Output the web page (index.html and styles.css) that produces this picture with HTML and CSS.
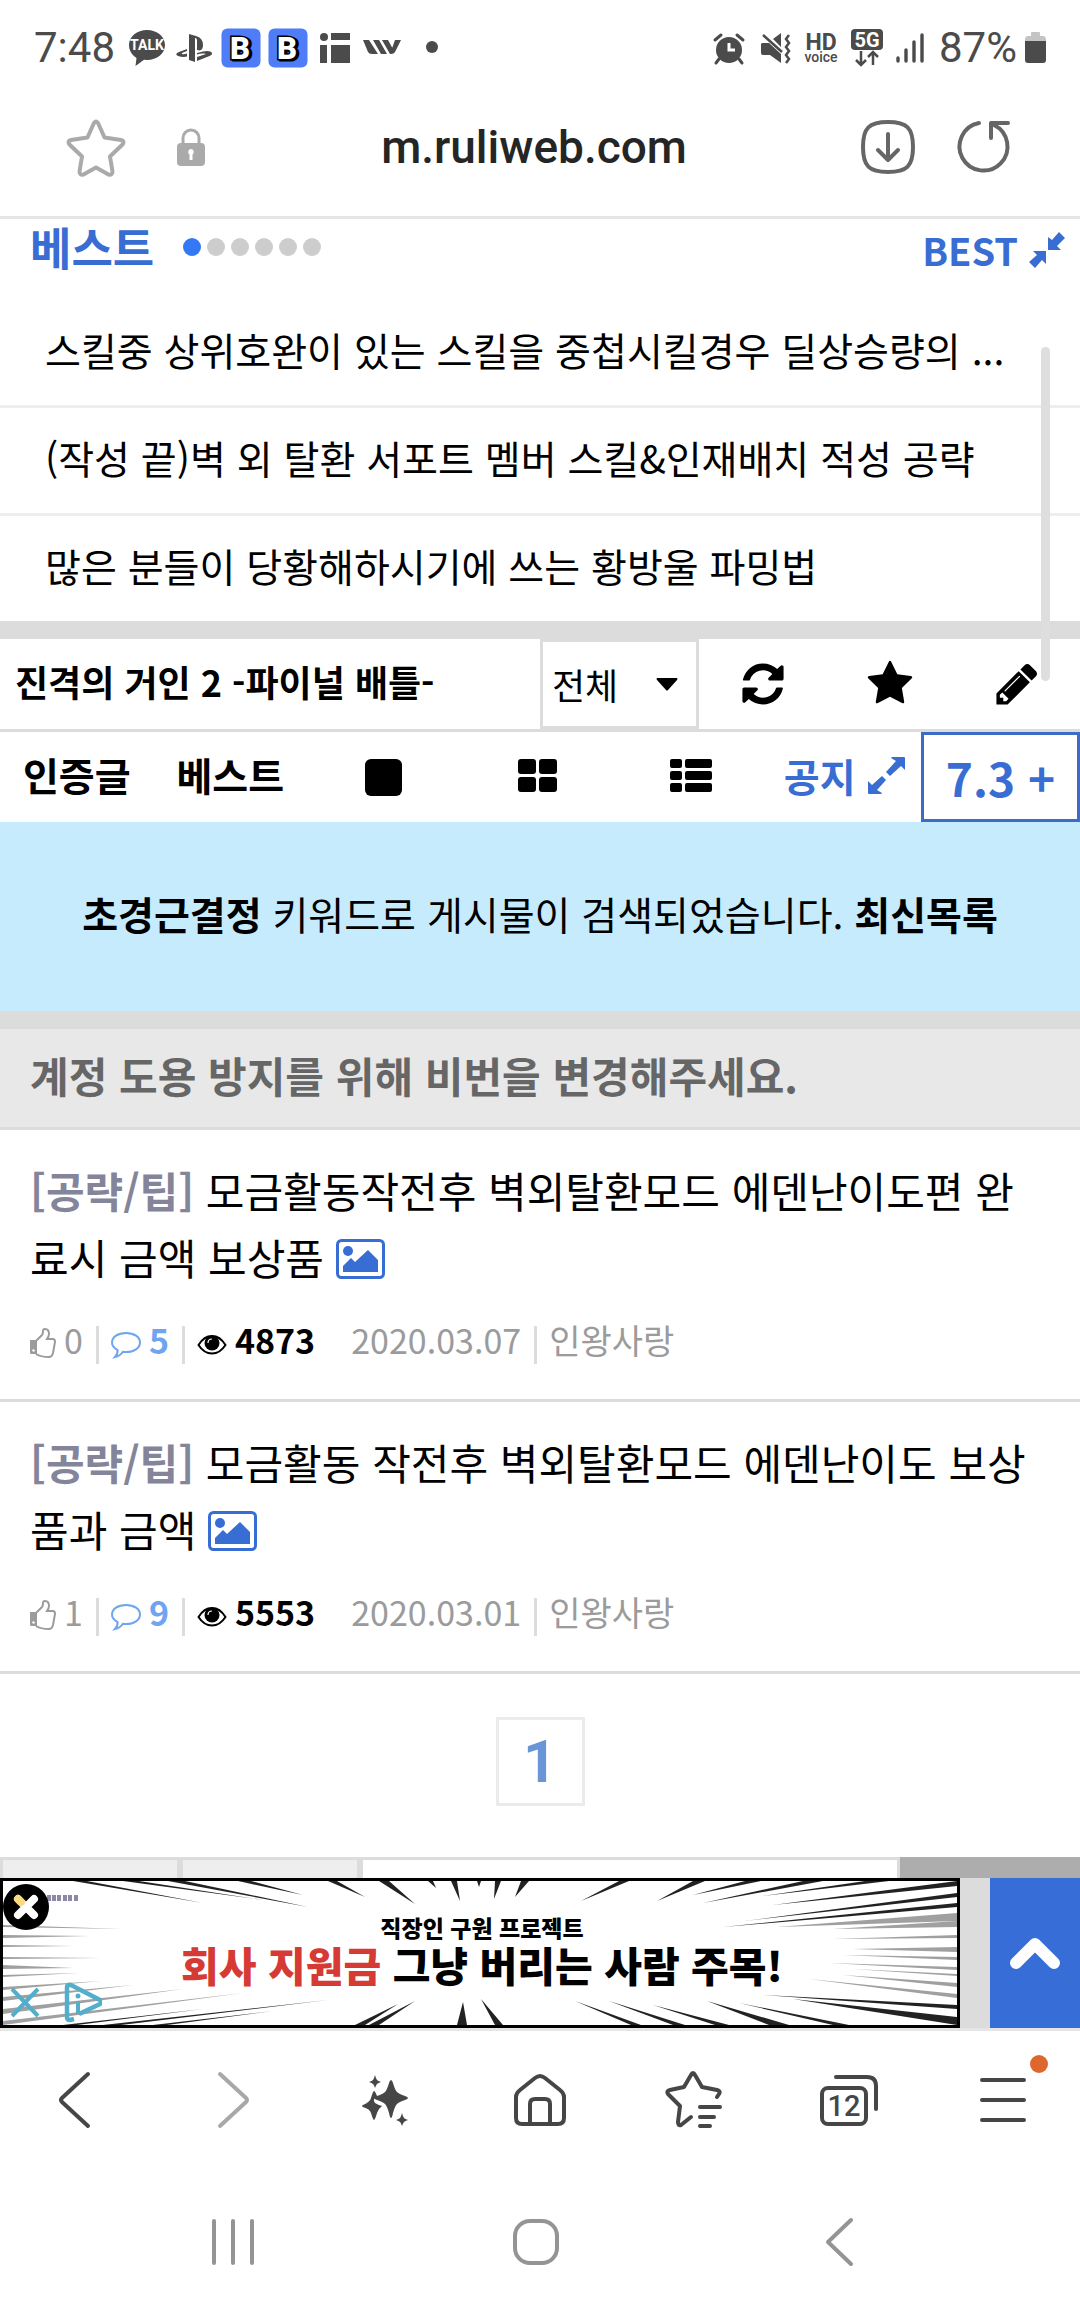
FILE: index.html
```html
<!DOCTYPE html>
<html lang="ko">
<head>
<meta charset="utf-8">
<meta name="viewport" content="width=device-width, initial-scale=1">
<title>m.ruliweb.com</title>
<link rel="stylesheet" href="styles.css">
</head>
<body>
<svg class="defs" aria-hidden="true">
  <defs>
    <symbol id="image" viewBox="0 0 49 40">
      <rect x="1.500" y="1.500" width="46" height="37" rx="4" fill="none" stroke="currentColor" stroke-width="3"/>
      <circle cx="12" cy="12" r="5" fill="currentColor"/>
      <path d="M7 33v-6l8-8 4 4 13-12 10 10v12z" fill="currentColor"/>
    </symbol>
    <symbol id="thumb" viewBox="0 0 26 30">
      <path d="M0 12h7v14H1.500Q0 26 0 24.500z" fill="currentColor"/>
      <path d="M6 13l6-6q1-1 1-4 0-2 2-2 4 0 4 5 0 2-2 5h6q2 0 2 3l-2 11q-1 4-4 4-8 0-13-3" fill="none" stroke="currentColor" stroke-width="2"/>
      <circle cx="3.500" cy="22.500" r="1.200" fill="#fff"/>
    </symbol>
    <symbol id="comment" viewBox="0 0 30 30">
      <path d="M15 3c8 0 14 4 14 9.500S23 22 15 22q-2 0-3-.3Q9 26 4 27q3-3 2.500-7Q1 17 1 12.500C1 7 7 3 15 3z" fill="none" stroke="currentColor" stroke-width="2"/>
    </symbol>
    <symbol id="eye" viewBox="0 0 30 30">
      <path d="M1.500 15Q7 6 15 6t13.500 9Q23 23.500 15 23.500T1.500 15z" fill="none" stroke="currentColor" stroke-width="2"/>
      <circle cx="15" cy="13" r="7.500" fill="currentColor"/>
      <path d="M11 13q0-4 4-4" fill="none" stroke="#fff" stroke-width="1.200"/>
    </symbol>
    <symbol id="app-b" viewBox="0 0 40 40">
      <rect width="39" height="39" x=".5" y=".5" rx="6" fill="#4f7cf7"/>
      <text x="21" y="32" text-anchor="middle" class="b-shadow">B</text>
      <text x="19" y="31" text-anchor="middle" class="b-face">B</text>
    </symbol>
  </defs>
</svg>

<header class="status">
  <div class="status-side">
    <span class="clock">7:48</span>
    <div class="status-icons">
      <svg viewBox="0 0 40 40"><path d="M20 2c10 0 18 6.500 18 15s-8 15-18 15l-3-.2L8.500 38l1-8C5 27 2 22.500 2 17 2 8.500 10 2 20 2z"/><text x="20" y="22" text-anchor="middle" class="talk">TALK</text></svg>
      <svg viewBox="0 0 40 40"><path d="M15 6l7 2q7 2 7 9t-6 5V12q0-2-2-2v24l-6-2z"/><path d="M13 21L5 24q-5 2-1 4 5 1.500 9 .5v-3q-3 1-5 .4-1-.6 1-1.400l4-1.400zM23 29l9-3q2 .6-1 2l-8 3v-2zm0-4q13-4 15 0 1 2-5 4l-10 4v-3l8-3q2-1-1-1.500-3-.3-7 1z"/></svg>
      <svg viewBox="0 0 40 40"><use href="#app-b"/></svg>
      <svg viewBox="0 0 40 40"><use href="#app-b"/></svg>
      <svg viewBox="0 0 40 40"><circle cx="9" cy="9" r="4"/><path d="M16 5h19v7H16zM5 17h7v18H5zM16 17h19v18H16z"/></svg>
      <svg viewBox="0 0 40 40"><path d="M1 12h6l9 14h-6q-3 0-4-2zM11 12h6l8 14h-6zM20 12h6l6 11-2 3h-2zM33 12h6l-6 12q-1 2-4 2h-1z"/></svg>
      <svg viewBox="0 0 40 40"><circle cx="23" cy="19" r="6"/></svg>
    </div>
  </div>
  <div class="status-side">
    <div class="status-icons tight">
      <svg viewBox="0 0 40 40"><circle cx="20" cy="22" r="13"/><path d="M10 31l-3 4M30 31l3 4M6 12l6-5M34 12l-6-5" fill="none" stroke="#4b4b4b" stroke-width="3" stroke-linecap="round"/><path d="M20 15v7h6" fill="none" stroke="#fff" stroke-width="3"/></svg>
      <svg viewBox="0 0 40 40"><path d="M6 16q0-1 2-1h6l12 11v9L15 27H8q-2 0-2-2zM18 11l8-6v14z"/><path d="M8 7l19 17M34 7l-3 4 3 4-3 4 3 4-3 4 3 4-3 4" fill="none" stroke="#4b4b4b" stroke-width="2.500"/></svg>
      <svg viewBox="0 0 40 40"><text x="20" y="22" text-anchor="middle" class="hd">HD</text><text x="20" y="34" text-anchor="middle" class="voice">voice</text></svg>
      <svg viewBox="0 0 40 40"><rect x="4" y="1" width="32" height="21" rx="4"/><text x="20" y="19" text-anchor="middle" class="five-g">5G</text><path d="M14 23v14m-5-5l5 5 5-5M26 37V24m-5 5l5-5 5 5" fill="none" stroke="#4b4b4b" stroke-width="2.500"/></svg>
      <svg viewBox="0 0 40 40"><path d="M5 33v-3M13 33V22M21 33V14M29 33V7" fill="none" stroke="#4b4b4b" stroke-width="3.400" stroke-linecap="round"/></svg>
    </div>
    <span class="clock">87%</span>
    <svg class="battery" viewBox="0 0 21 32"><path d="M6 1q0-1 1-1h7q1 0 1 1v3h3q3 0 3 4v2H0V8q0-4 3-4h3z" fill="#c4c4c4"/><path d="M0 9h21v19q0 3-3 3H3q-3 0-3-3z"/></svg>
  </div>
</header>

<nav class="address" aria-label="address">
  <button class="icon-btn pale" aria-label="bookmark"><svg width="60" height="60" viewBox="0 0 60 60"><path class="line" d="M27.500 7q2.500-5 5 0l6 13.500 16.500 2.500q4 1 1.500 4.500L44 39.500l2.500 15q0 4-4 3L30 50.500l-12.500 7q-4 1-4-3l2.500-15L3.500 27.500Q1 24 5 23l16.500-2.500z"/></svg></button>
  <svg class="lock" width="30" height="40" viewBox="0 0 30 40"><path d="M7 17V11a8 8 0 0 1 16 0v6" fill="none" stroke="#aaa" stroke-width="3"/><rect x="1" y="16" width="28" height="23" rx="4" fill="#aaa"/><path d="M15 22a3 3 0 0 1 1.500 5.500V33h-3v-5.500A3 3 0 0 1 15 22z" fill="#fff"/></svg>
  <span class="url">m.ruliweb.com</span>
  <button class="icon-btn" aria-label="download"><svg width="60" height="60" viewBox="0 0 60 60"><path class="line" d="M30 5c19 0 25 6 25 25s-6 25-25 25S5 49 5 30 11 5 30 5zM30 17v26M20 33l10 10 10-10"/></svg></button>
  <button class="icon-btn" aria-label="reload"><svg width="60" height="60" viewBox="0 0 60 60"><path class="line" d="M25 6a24 24 0 1 0 15 2M37 21V6h17"/></svg></button>
</nav>

<main>
  <section class="best">
    <div class="best-head">
      <h2>베스트</h2>
      <div class="dots"><i class="on"></i><i></i><i></i><i></i><i></i><i></i></div>
      <a class="best-link" href="#best">BEST <svg width="36" height="36" viewBox="0 0 36 36"><path d="M19 5v13h13l-4-4 8-8-6-6-7 8zM17 32V19H4l4 4-8 7 6 6 7-8z"/></svg></a>
    </div>
    <ul>
      <li><a href="#1">스킬중 상위호완이 있는 스킬을 중첩시킬경우 딜상승량의 ...</a></li>
      <li><a href="#2">(작성 끝)벽 외 탈환 서포트 멤버 스킬&amp;인재배치 적성 공략</a></li>
      <li><a href="#3">많은 분들이 당황해하시기에 쓰는 황방울 파밍법</a></li>
    </ul>
    <div class="scrollbar"></div>
  </section>

  <div class="band"></div>

  <section class="board">
    <h1>진격의 거인 2 -파이널 배틀-</h1>
    <div class="picker">
      <select aria-label="분류"><option>전체</option></select>
      <svg width="22" height="14" viewBox="0 0 22 14"><path d="M1 1h20q1 1 0 2L12 13q-1 1-2 0L1 3q-1-1 0-2z"/></svg>
    </div>
    <button class="icon-btn" aria-label="새로고침"><svg width="48" height="48" viewBox="0 0 1792 1792"><path d="M1639 1056q0 5-1 7-64 268-268 434.500t-478 166.500q-146 0-282.500-55t-243.500-157l-129 129q-19 19-45 19t-45-19-19-45v-448q0-26 19-45t45-19h448q26 0 45 19t19 45-19 45l-137 137q71 66 161 102t187 36q134 0 250-65t186-179q11-17 53-117 8-23 30-23h192q13 0 22.500 9.500t9.500 22.500zm25-800v448q0 26-19 45t-45 19h-448q-26 0-45-19t-19-45 19-45l138-138q-148-137-349-137-134 0-250 65t-186 179q-11 17-53 117-8 23-30 23h-199q-13 0-22.500-9.500t-9.500-22.500v-7q65-268 270-434.500t480-166.500q146 0 284 55.500t245 156.500l130-129q19-19 45-19t45 19 19 45z"/></svg></button>
    <button class="icon-btn" aria-label="즐겨찾기"><svg width="48" height="48" viewBox="0 0 1792 1792"><path d="M1728 647q0 22-26 48l-363 354 86 500q1 7 1 20 0 21-10.500 35.500t-30.500 14.500q-19 0-40-12l-449-236-449 236q-22 12-40 12-21 0-31.500-14.500t-10.500-35.500q0-6 2-20l86-500-364-354q-25-27-25-48 0-37 56-46l502-73 225-455q19-41 49-41t49 41l225 455 502 73q56 9 56 46z"/></svg></button>
    <button class="icon-btn" aria-label="글쓰기"><svg width="48" height="48" viewBox="0 0 1792 1792"><path d="M491 1536l91-91-235-235-91 91v107h128v128h107zm523-928q0-22-22-22-10 0-17 7l-542 542q-7 7-7 17 0 22 22 22 10 0 17-7l542-542q7-7 7-17zm-54-192l416 416-832 832h-416v-416zm683 96q0 53-37 90l-166 166-416-416 166-165q36-38 90-38 53 0 91 38l235 234q37 39 37 91z"/></svg></button>
  </section>

  <nav class="tools" aria-label="board">
    <a href="#cert">인증글</a>
    <a href="#best">베스트</a>
    <button class="icon-btn" aria-label="카드"><svg width="37" height="37" viewBox="0 0 37 37"><rect width="37" height="37" rx="6"/></svg></button>
    <button class="icon-btn" aria-label="갤러리"><svg width="39" height="37" viewBox="0 0 39 37"><rect width="18" height="15" rx="3"/><rect x="21" width="18" height="15" rx="3"/><rect y="18" width="18" height="15" rx="3"/><rect x="21" y="18" width="18" height="15" rx="3"/></svg></button>
    <button class="icon-btn" aria-label="목록"><svg width="42" height="37" viewBox="0 0 42 37"><path d="M2 0h8q2 0 2 2v5q0 2-2 2H2Q0 9 0 7V2q0-2 2-2zM17 0h23q2 0 2 2v5q0 2-2 2H17q-2 0-2-2V2q0-2 2-2zM2 12h8q2 0 2 2v5q0 2-2 2H2q-2 0-2-2v-5q0-2 2-2zM17 12h23q2 0 2 2v5q0 2-2 2H17q-2 0-2-2v-5q0-2 2-2zM2 24h8q2 0 2 2v5q0 2-2 2H2q-2 0-2-2v-5q0-2 2-2zM17 24h23q2 0 2 2v5q0 2-2 2H17q-2 0-2-2v-5q0-2 2-2z"/></svg></button>
    <a class="notice-link" href="#notice">공지<svg width="37" height="37" viewBox="0 0 37 37"><path d="M24 0h12q1 0 1 1v12l-4-4-11 10-4-4L28 4l-5-3zM13 37H1q-1 0-1-1V24l4 4 10-9 4 4L9 33l5 3z"/></svg></a>
    <a class="score" href="#score">7.3 +</a>
  </nav>

  <p class="searched"><span><b>초경근결정</b> 키워드로 게시물이 검색되었습니다. <a href="#latest"><b>최신목록</b></a></span></p>

  <div class="band"></div>

  <p class="notice">계정 도용 방지를 위해 비번을 변경해주세요.</p>

  <article class="post">
    <a class="title" href="#p1"><b>[공략/팁]</b> 모금활동작전후 벽외탈환모드 에덴난이도편 완료시 금액 보상품 <svg><use href="#image"/></svg></a>
    <div class="meta">
      <span class="item"><svg class="thumb"><use href="#thumb"/></svg>0</span>
      <span class="item replies"><svg><use href="#comment"/></svg>5</span>
      <span class="item views"><svg><use href="#eye"/></svg>4873</span>
      <span class="item date">2020.03.07</span>
      <span class="item">인왕사랑</span>
    </div>
  </article>
  <article class="post">
    <a class="title" href="#p2"><b>[공략/팁]</b> 모금활동 작전후 벽외탈환모드 에덴난이도 보상품과 금액 <svg><use href="#image"/></svg></a>
    <div class="meta">
      <span class="item"><svg class="thumb"><use href="#thumb"/></svg>1</span>
      <span class="item replies"><svg><use href="#comment"/></svg>9</span>
      <span class="item views"><svg><use href="#eye"/></svg>5553</span>
      <span class="item date">2020.03.01</span>
      <span class="item">인왕사랑</span>
    </div>
  </article>

  <nav class="pages" aria-label="pages"><a href="#page1">1</a></nav>

  <form class="search">
    <button type="button" aria-label="분류"></button>
    <button type="button" aria-label="제목"></button>
    <input type="text" aria-label="검색어">
    <button type="button" class="go" aria-label="검색"></button>
  </form>
</main>

<aside class="dock">
  <div class="ad">
    <svg class="rays" viewBox="0 0 954 144" preserveAspectRatio="none">
      <g fill="#222">
        <path d="M70 0L200 22 84 0zM120 0L260 19 136 0zM165 0L305 26 182 0zM235 0L300 14 248 0zM325 0L362 16 334 0zM376 0L412 23 386 0zM425 0L433 7 430 0zM448 0L457 20 454 0zM474 0L476 6 478 0zM492 0L491 18 498 0zM518 0L512 16 526 0zM616 0L578 20 626 0zM690 0L654 20 702 0zM742 0L690 14 758 0zM800 0L700 22 820 0zM862 0L760 15 886 0z"/>
        <path d="M954 0L770 24 954 5zM954 12L742 40 954 16zM954 22L720 46 954 26z"/>
        <path d="M352 144L395 123 362 144zM366 144L412 120 376 144zM454 144L460 121 464 144zM492 144L478 118 500 144zM628 144L572 120 638 144zM670 144L606 120 682 144zM712 144L650 124 726 144zM766 144L704 120 786 144zM830 144L736 122 846 144z"/>
        <path d="M100 144L325 119 118 144zM150 144L270 130 164 144zM954 144L790 118 954 136zM954 128L760 114 954 124zM60 144L200 128 74 144z"/>
      </g>
      <g fill="#777" opacity=".7">
        <path d="M954 32L774 46 954 40zM954 40L830 48 954 46zM954 54L830 58 954 57zM954 66L850 68 954 71zM954 76L840 74 954 79zM954 86L826 82 954 89zM954 93L850 88 954 95zM954 102L840 94 954 106zM954 113L806 98 954 117z"/>
        <path d="M0 44L120 48 0 46zM0 54L86 55 0 57zM0 64L70 65 0 66zM0 76L98 77 0 78zM0 84L70 87 0 88zM0 94L76 92 0 96zM0 106L98 100 0 109zM0 116L130 104 0 120zM0 128L180 108 0 133zM0 140L240 112 0 144z"/>
      </g>
      <path d="M44 14h4v6h-4zM49 14h4v6h-4zM54 14h4v6h-4zM60 14h4v6h-4zM65 14h4v6h-4zM71 14h4v6h-4z" fill="#8b88a8"/>
    </svg>
    <div class="ad-copy">
      <small>직장인 구원 프로젝트</small>
      <strong><em>회사 지원금</em> 그냥 버리는 사람 주목!</strong>
    </div>
    <button class="ad-close" aria-label="광고 닫기"><svg width="46" height="46" viewBox="0 0 46 46"><circle cx="23" cy="23" r="23"/><path d="M15 15l16 16M31 15L15 31" stroke="#fff" stroke-width="8" stroke-linecap="round"/><path d="M15 15l3 3" stroke="#fbd980" stroke-width="8" stroke-linecap="round"/></svg></button>
    <button class="ad-info" aria-label="광고 정보"><svg width="96" height="42" viewBox="0 0 96 42"><path d="M6 8l26 27M32 8L6 35" fill="none" stroke="#52aecb" stroke-width="4"/><path d="M68 38l-4 1q-3 0-3-3V6q0-3 4-2l29 15q3 2 0 4L73 33" fill="none" stroke="#52aecb" stroke-width="4.500"/><circle cx="72" cy="15" r="2.500" fill="#52aecb"/><path d="M72 20v13" stroke="#52aecb" stroke-width="4"/></svg></button>
  </div>
  <button class="top" aria-label="맨 위로"><svg width="54" height="36" viewBox="0 0 54 36"><path d="M8 28L27 9l19 19" fill="none" stroke="#fff" stroke-width="12" stroke-linecap="round" stroke-linejoin="round"/></svg></button>
</aside>

<nav class="browser" aria-label="browser">
  <button class="icon-btn" aria-label="back"><svg width="60" height="60" viewBox="0 0 60 60"><path class="line" d="M41 4L15 28q-2 2 0 4l26 24" /></svg></button>
  <button class="icon-btn faint" aria-label="forward"><svg width="60" height="60" viewBox="0 0 60 60"><path class="line" d="M19 4l26 24q2 2 0 4L19 56"/></svg></button>
  <button class="icon-btn" aria-label="assistant"><svg width="60" height="60" viewBox="0 0 60 60"><path d="M35 10q1 0 2 3 2 7 4 9 2 2 8 4 3 1 3 2t-3 2q-6 2-8 4-2 2-4 9-1 5-2 5t-2-5q-2-7-4-9-2-2-8-4-3-1-3-2t3-2q6-2 8-4 2-2 4-9 1-3 2-3zM18 21q1 0 3 5-5 3-2 7 3 2 7 3-4 3-5 7-2 7-3 7t-3-7q-1-4-8-6-2-1 0-2 7-3 8-7 2-7 3-7zM19 5q1 4 2 5 1 1 4 2-3 1-4 2-1 1-2 4-1-3-2-4-1-1-4-2 3-1 4-2 1-1 2-5zM46 43q1 4 2 5 1 1 4 2-3 1-4 2-1 1-2 4-1-3-2-4-1-1-4-2 3-1 4-2 1-1 2-5z"/></svg></button>
  <button class="icon-btn" aria-label="home"><svg width="60" height="60" viewBox="0 0 60 60"><path class="line" d="M12 54q-6 0-6-6V27q0-4 4-7L25 8q5-4 10 0l15 12q4 3 4 7v21q0 6-6 6zM20 54V34q0-5 5-5h10q5 0 5 5v20"/></svg></button>
  <button class="icon-btn" aria-label="bookmarks"><svg width="60" height="60" viewBox="0 0 60 60"><path class="line" d="M27 47l-10 8q-3 1-3-3l2-16L4 24q-2-3 2-4l14-3 7-12q2-4 4 0l7 12 15 3q4 1 2 4l-2 3M36 37h20M36 47h14M36 56h10"/></svg></button>
  <button class="icon-btn tabs" aria-label="tabs"><svg width="60" height="60" viewBox="0 0 60 60"><rect class="line" x="3" y="18" width="44" height="36" rx="6"/><path class="line" d="M17 7h31q9 0 9 9v23"/><text x="25" y="46" text-anchor="middle" class="count">12</text></svg></button>
  <button class="icon-btn" aria-label="menu"><svg width="60" height="60" viewBox="0 0 60 60"><path class="line" d="M9 10h42M9 30h42M9 50h42"/></svg><i class="badge"></i></button>
</nav>

<nav class="system" aria-label="system">
  <button class="icon-btn" aria-label="recents"><svg width="60" height="60" viewBox="0 0 60 60"><path class="line" d="M11 9v42M30 9v42M49 9v42"/></svg></button>
  <button class="icon-btn" aria-label="home"><svg width="60" height="60" viewBox="0 0 60 60"><rect class="line" x="9" y="9" width="42" height="42" rx="15"/></svg></button>
  <button class="icon-btn" aria-label="back"><svg width="60" height="60" viewBox="0 0 60 60"><path class="line" d="M42 8L19 30l23 22"/></svg></button>
</nav>
</body>
</html>
```
FILE: styles.css
```css
* {
  box-sizing: border-box;
}

body {
  margin: 0;
  background: #fff;
  color: #000;
  font-family: "Noto Sans CJK KR", "Noto Sans", sans-serif;
  font-size: 39px;
}

h1, h2, p, ul {
  margin: 0;
  padding: 0;
}

a {
  color: inherit;
  text-decoration: none;
}

button {
  padding: 0;
  border: 0;
  background: none;
  font: inherit;
  color: inherit;
}

svg {
  display: block;
  fill: currentColor;
}

.defs {
  position: absolute;
  width: 0;
  height: 0;
}

.icon-btn {
  position: relative;
  display: flex;
  align-items: center;
  justify-content: center;
}

.line {
  fill: none;
  stroke: currentColor;
  stroke-width: 4;
  stroke-linecap: round;
  stroke-linejoin: round;
}

/* Status bar */
.status {
  display: flex;
  justify-content: space-between;
  height: 96px;
  padding: 0 34px;
  color: #4b4b4b;
  font-family: Roboto, sans-serif;
}

.status-side {
  display: flex;
  align-items: center;
}

.clock {
  font-size: 42px;
  line-height: 48px;
}

.status-icons {
  display: flex;
  gap: 7px;
  margin-left: 12px;
}

.status-icons svg {
  width: 40px;
  height: 40px;
}

.tight {
  gap: 6px;
  margin-right: 6px;
}

.battery {
  width: 21px;
  height: 32px;
  margin-left: 8px;
}

.talk {
  fill: #fff;
  font-size: 14px;
  font-weight: 700;
}

.b-face, .b-shadow {
  font-size: 31px;
  font-weight: 900;
  stroke: #000;
  stroke-width: 3px;
  paint-order: stroke;
}

.b-face {
  fill: #fff;
}

.b-shadow {
  fill: #000;
}

.hd {
  font-size: 23px;
  font-weight: 700;
}

.voice {
  font-size: 14px;
  font-weight: 500;
}

.five-g {
  fill: #fff;
  font-size: 20px;
  font-weight: 700;
}

/* Address bar */
.address {
  display: flex;
  align-items: center;
  height: 123px;
  padding: 0 66px 18px;
  border-bottom: 3px solid #e5e5e5;
  color: #666;
}

.pale {
  color: #aaa;
}

.lock {
  margin-left: 50px;
}

.url {
  flex: 1;
  padding-left: 4px;
  color: #252525;
  font-family: Roboto, sans-serif;
  font-size: 46px;
  font-weight: 500;
  text-align: center;
}

.address .icon-btn + .icon-btn {
  margin-left: 36px;
}

/* Best list */
.best {
  position: relative;
}

.best-head {
  display: flex;
  align-items: flex-start;
  height: 81px;
  padding: 0 15px 0 30px;
  color: #386dd4;
}

.best-head h2 {
  font-size: 45px;
  line-height: 56px;
}

.dots {
  display: flex;
  gap: 6px;
  margin: 19px auto 0 29px;
}

.dots i {
  width: 18px;
  height: 18px;
  border-radius: 50%;
  background: #cdcdcd;
}

.dots .on {
  background: #3478f5;
}

.best-link {
  display: flex;
  align-items: center;
  gap: 11px;
  font-size: 38px;
  font-weight: 700;
  line-height: 62px;
}

.best ul {
  list-style: none;
}

.best li {
  height: 105px;
  padding: 0 45px;
  line-height: 99px;
  white-space: nowrap;
}

.best li + li {
  height: 108px;
  border-top: 3px solid #eee;
}

.scrollbar {
  position: absolute;
  top: 128px;
  right: 30px;
  z-index: 1;
  width: 9px;
  height: 334px;
  border-radius: 5px;
  background: #dedede;
}

.band {
  height: 18px;
  background: #dcdcdc;
}

/* Board header */
.board {
  display: grid;
  grid-template-columns: 1fr 159px repeat(3, 127px);
  height: 93px;
  border-bottom: 3px solid #dcdcdc;
}

.board h1 {
  padding-left: 15px;
  font-size: 36px;
  line-height: 84px;
  white-space: nowrap;
}

.picker {
  display: grid;
  align-items: center;
  border: 3px solid #dcdcdc;
}

.picker > * {
  grid-area: 1 / 1;
}

.picker svg {
  justify-self: end;
  margin-right: 18px;
  pointer-events: none;
}

.picker select {
  width: 100%;
  height: 84px;
  padding: 0 9px;
  border: 0;
  background: none;
  appearance: none;
  color: #000;
  font: inherit;
  font-size: 36px;
}

.tools {
  display: grid;
  grid-template-columns: repeat(6, 1fr) 159px;
  height: 90px;
  font-weight: 700;
  line-height: 84px;
  text-align: center;
  white-space: nowrap;
}

.notice-link {
  display: flex;
  align-items: center;
  justify-content: center;
  gap: 12px;
  padding-bottom: 4px;
  color: #386dd4;
}

.score {
  border: 3px solid #3c6cc6;
  color: #386dd4;
  font-size: 46px;
}

.searched {
  display: flex;
  align-items: center;
  justify-content: center;
  height: 189px;
  padding-bottom: 8px;
  background: #c5ebfd;
}

.notice {
  height: 101px;
  padding: 0 30px;
  border-bottom: 3px solid #dcdcdc;
  background: #e8e8e8;
  color: #666;
  font-size: 42px;
  font-weight: 700;
  line-height: 92px;
}

/* Posts */
.post {
  padding: 26px 45px 35px 30px;
  border-bottom: 3px solid #dcdcdc;
}

.title {
  display: block;
  font-size: 42px;
  line-height: 67px;
}

.title b {
  color: #84859a;
}

.title svg {
  display: inline-block;
  width: 49px;
  height: 40px;
  color: #386dd4;
  vertical-align: -4px;
}

.meta {
  display: flex;
  margin-top: 36px;
  color: #9b9b9b;
  font-size: 34px;
  line-height: 28px;
}

.item {
  display: flex;
  gap: 8px;
  height: 38px;
  padding-left: 12px;
}

.item:first-child {
  padding-left: 0;
}

.item:not(.views):not(:last-child) {
  padding-right: 13px;
  border-right: 3px solid #dcdcdc;
}

.item svg {
  width: 30px;
  height: 30px;
  margin-top: 4px;
}

.item .thumb {
  width: 26px;
  margin-top: 2px;
}

.replies {
  color: #6ea4f0;
  font-weight: 700;
}

.views {
  color: #000;
  font-weight: 700;
}

.date {
  padding-left: 36px;
}

.pages {
  display: flex;
  justify-content: center;
  padding: 43px 0 51px;
}

.pages a {
  width: 89px;
  height: 89px;
  border: 3px solid #ebebeb;
  color: #6a96d8;
  font-family: Roboto, sans-serif;
  font-size: 59px;
  font-weight: 700;
  line-height: 84px;
  text-align: center;
}

.search {
  display: grid;
  grid-template-columns: 180px 180px 1fr 180px;
  height: 21px;
}

.search > * {
  min-width: 0;
  border: 3px solid #dcdcdc;
  border-bottom: 0;
  border-radius: 0;
  background: #eee;
}

.search input {
  background: #fff;
}

.search .go {
  border: 0;
  background: #adadad;
}

/* Ad and back-to-top */
.dock {
  display: grid;
  grid-template-columns: 1fr 90px;
  gap: 30px;
  height: 153px;
  border-bottom: 3px solid #e5e5e5;
  background: #dcdcdc;
}

.ad {
  position: relative;
  display: grid;
  border: 3px solid #000;
  background: #fff;
}

.rays {
  position: absolute;
  width: 100%;
  height: 100%;
}

.ad-copy {
  position: relative;
  display: flex;
  flex-direction: column;
  align-items: center;
  justify-content: center;
  padding: 0 0 2px 4px;
  font-weight: 900;
  white-space: nowrap;
}

.ad-copy small {
  font-size: 23px;
  line-height: 24px;
}

.ad-copy strong {
  font-size: 41px;
  font-weight: 900;
  line-height: 50px;
}

.ad-copy em {
  color: #d63a34;
  font-style: normal;
}

.ad-close {
  position: absolute;
  top: 3px;
  left: 0;
}

.ad-info {
  position: absolute;
  bottom: 2px;
  left: 3px;
}

.top {
  display: flex;
  align-items: center;
  justify-content: center;
  background: #366dd7;
}

/* Browser and system navigation */
.browser {
  display: grid;
  grid-template-columns: repeat(7, 1fr);
  height: 139px;
  padding-bottom: 2px;
  color: #464646;
}

.faint {
  color: #a8a8a8;
}

.count {
  font-family: Roboto, sans-serif;
  font-size: 29px;
  font-weight: 500;
}

.badge {
  position: absolute;
  top: 24px;
  right: 32px;
  width: 18px;
  height: 18px;
  border-radius: 50%;
  background: #de672d;
}

.system {
  display: grid;
  grid-template-columns: repeat(3, 1fr);
  height: 146px;
  padding: 0 90px 2px 82px;
  color: #949494;
}
```
